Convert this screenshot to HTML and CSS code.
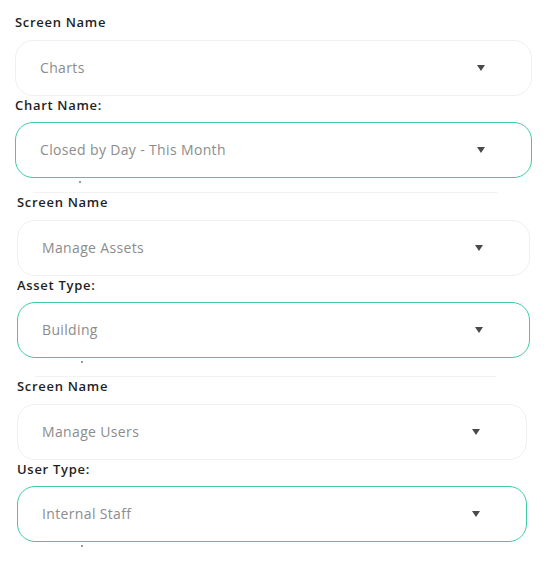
FILE: index.html
```html
<!DOCTYPE html>
<html lang="en">
<head>
  <meta charset="UTF-8">
  <title>Screen Filters</title>
  <link rel="stylesheet" href="styles.css">
</head>

<body>
  <div class="panel">

    <div class="group group-charts">
      <label class="label">Screen Name</label>
      <div class="select">
        <span class="value">Charts</span>
        <span class="caret"></span>
      </div>
      <label class="label">Chart Name:</label>
      <div class="select active">
        <span class="value">Closed by Day - This Month</span>
        <span class="caret"></span>
      </div>
      <div class="group-foot">
        <span class="mark"></span>
      </div>
      <div class="divider"></div>
    </div>

    <div class="group group-assets">
      <label class="label">Screen Name</label>
      <div class="select">
        <span class="value">Manage Assets</span>
        <span class="caret"></span>
      </div>
      <label class="label">Asset Type:</label>
      <div class="select active">
        <span class="value">Building</span>
        <span class="caret"></span>
      </div>
      <div class="group-foot tall">
        <span class="mark"></span>
      </div>
      <div class="divider"></div>
    </div>

    <div class="group group-users">
      <label class="label">Screen Name</label>
      <div class="select">
        <span class="value">Manage Users</span>
        <span class="caret"></span>
      </div>
      <label class="label">User Type:</label>
      <div class="select active">
        <span class="value">Internal Staff</span>
        <span class="caret"></span>
      </div>
      <div class="group-foot">
        <span class="mark"></span>
      </div>
    </div>

  </div>
</body>
</html>
```

FILE: styles.css
```css
:root {
  --label: #1f1f1f;
  --value: #8c8c8c;
  --border: #efefef;
  --teal: #3ccaa8;
  --caret: #4a4a4a;
}

body {
  margin: 0;
  background: #ffffff;
  font-family: 'Open Sans', sans-serif;
}

.panel {
  padding-top: 13px;
}

.group {
  padding: 0 14px 0 15px;
}

.group-assets {
  padding: 0 16px 0 17px;
}

.group-users {
  padding: 0 19px 0 17px;
}

.label {
  display: block;
  height: 18px;
  line-height: 18px;
  font-size: 13px;
  font-weight: 600;
  letter-spacing: 0.7px;
  color: var(--label);
  margin-bottom: 9px;
}

.select {
  height: 56px;
  box-sizing: border-box;
  display: flex;
  align-items: center;
  justify-content: space-between;
  padding: 0 46px 1px 24px;
  border: 1.5px solid var(--border);
  border-radius: 18px;
}

.select + .label {
  margin-bottom: 8px;
}

.select.active {
  border-color: var(--teal);
}

.value {
  font-size: 14px;
  letter-spacing: 0.35px;
  color: var(--value);
}

.caret {
  width: 0;
  height: 0;
  border-left: 4px solid transparent;
  border-right: 4px solid transparent;
  border-top: 6px solid var(--caret);
}

.group-foot {
  height: 11px;
  padding-left: 64px;
}

.group-foot.tall {
  height: 15px;
}

.mark {
  display: block;
  width: 2px;
  height: 2px;
  margin-top: 3px;
  background: #9a9a9a;
}

.divider {
  height: 1px;
  margin: 0 34px 0 18px;
  background: #f2f2f2;
}
```
